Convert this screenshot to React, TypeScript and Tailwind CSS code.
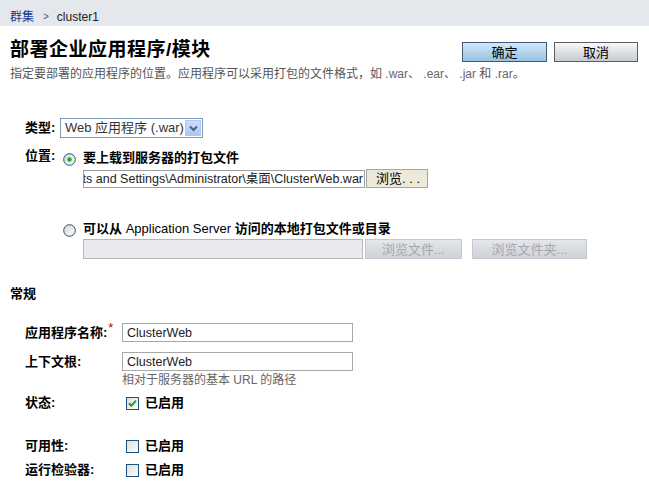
import { ReactNode } from "react";

const font = "font-['Liberation_Sans','Noto_Sans_CJK_SC',sans-serif]";

function Radio({ checked }: { checked?: boolean }) {
  return (
    <svg width="13" height="13" viewBox="0 0 13 13" className="shrink-0 translate-y-[3px]">
      <defs>
        <linearGradient id="radioFill" x1="0" y1="0" x2="1" y2="1">
          <stop offset="0" stopColor="#d6d6ce" />
          <stop offset="1" stopColor="#ffffff" />
        </linearGradient>
      </defs>
      <circle cx="6.5" cy="6.5" r="5.8" fill="url(#radioFill)" stroke="#1c5180" strokeWidth="1" />
      {checked && <circle cx="6.5" cy="6.5" r="2.2" fill="#2aa52a" />}
    </svg>
  );
}

function Checkbox({ checked }: { checked?: boolean }) {
  return (
    <svg width="13" height="13" viewBox="0 0 13 13" className="shrink-0">
      <defs>
        <linearGradient id="boxFill" x1="0" y1="0" x2="1" y2="1">
          <stop offset="0" stopColor="#dcdcd6" />
          <stop offset="1" stopColor="#ffffff" />
        </linearGradient>
      </defs>
      <rect x="0.5" y="0.5" width="12" height="12" fill="url(#boxFill)" stroke="#1c5180" />
      {checked && (
        <path d="M3 6.3 L5.3 8.8 L10 3.6" fill="none" stroke="#21a121" strokeWidth="2" />
      )}
    </svg>
  );
}

function Row({ label, children, className = "" }: { label: ReactNode; children: ReactNode; className?: string }) {
  return (
    <div className={`flex items-center ${className}`}>
      <div className="w-[97px] shrink-0 font-bold text-black">{label}</div>
      {children}
    </div>
  );
}

function Enabled({ checked }: { checked?: boolean }) {
  return (
    <div className="ml-[4px] flex items-center">
      <Checkbox checked={checked} />
      <span className="ml-[6px] font-bold">已启用</span>
    </div>
  );
}

export default function App() {
  return (
    <div className={`${font} w-[649px] h-[491px] bg-white text-[13px] leading-[16px] text-black overflow-hidden`}>
      <div className="h-[26px] bg-[#e4e7eb] flex items-end pb-[1px] px-[10px] text-[12px]">
        <span className="text-[#0b3b9a]">群集</span>
        <span className="text-[#3b5a9a] ml-[9px] mr-[8px] text-[10px]">&gt;</span>
        <span className="text-[#222]">cluster1</span>
      </div>

      <div className="flex items-start pl-[10px] pr-[11px] pt-[13px]">
        <h1 className="text-[19px] leading-[22px] font-bold tracking-[0.5px]">部署企业应用程序/模块</h1>
        <div className="ml-auto flex gap-[7px] mt-[3px]">
          <button className="w-[85px] h-[20px] border border-[#3e5c78] bg-gradient-to-b from-[#d4e8f6] to-[#96c2e2] text-[13px] leading-none">
            确定
          </button>
          <button className="w-[84px] h-[20px] border border-[#5a5f66] bg-gradient-to-b from-[#f8f8f8] to-[#c6cad2] text-[13px] leading-none">
            取消
          </button>
        </div>
      </div>

      <p className="pl-[10px] mt-[4px] text-[12px] leading-[16px] text-[#555]">
        指定要部署的应用程序的位置。应用程序可以采用打包的文件格式，如 <span className="text-[#666]">.war、 .ear、 .jar</span> 和 <span className="text-[#666]">.rar</span>。
      </p>

      <div className="pl-[25px] mt-[36px]">
        <div className="flex items-center">
          <div className="w-[35px] font-bold">类型:</div>
          <div className="w-[143px] h-[20px] border border-[#7f9db9] flex items-center pl-[4px] pr-[1px]">
            <span className="text-[#333] whitespace-nowrap">Web 应用程序 (.war)</span>
            <div className="ml-auto w-[16px] h-[16px] bg-gradient-to-b from-[#cddcfc] to-[#b2c6f4] border border-[#b4c7f2] flex items-center justify-center">
              <svg width="9" height="7" viewBox="0 0 9 7">
                <path d="M1 1.5 L4.5 5 L8 1.5" fill="none" stroke="#4d6185" strokeWidth="2" />
              </svg>
            </div>
          </div>
        </div>

        <div className="flex mt-[10px]">
          <div className="w-[38px] font-bold">位置:</div>
          <div className="flex flex-col">
            <div className="flex items-start h-[16px] mt-[2px]">
              <Radio checked />
              <span className="ml-[7px] font-bold">要上载到服务器的打包文件</span>
            </div>
            <div className="flex items-center ml-[20px] mt-[3px]">
              <div className="w-[282px] h-[18px] border border-[#9aa0a6] overflow-hidden flex items-center justify-end pr-[1px] whitespace-nowrap text-[12.5px] text-[#222]">
                C:\Documents and Settings\Administrator\桌面\ClusterWeb.war
              </div>
              <button className="ml-[1px] w-[62px] h-[19px] border border-[#a5a5a5] bg-[#ece9d8] text-left pl-[9px] text-[13px] leading-none">
                浏览. . .
              </button>
            </div>

            <div className="flex items-start h-[16px] mt-[33px]">
              <Radio />
              <span className="ml-[7px] font-bold">
                可以从 <span className="font-normal">Application Server</span> 访问的本地打包文件或目录
              </span>
            </div>
            <div className="flex items-center ml-[20px] mt-[2px]">
              <div className="w-[280px] h-[20px] border border-[#b4b8be] bg-[#e8eaee]" />
              <button className="ml-[2px] w-[97px] h-[20px] border border-[#c5c9cf] bg-gradient-to-b from-[#e4e6ea] to-[#cfd2d8] text-[#a4a8ae] text-[13px] leading-none">
                浏览文件...
              </button>
              <button className="ml-[10px] w-[115px] h-[20px] border border-[#c5c9cf] bg-gradient-to-b from-[#e4e6ea] to-[#cfd2d8] text-[#a4a8ae] text-[13px] leading-none">
                浏览文件夹...
              </button>
            </div>
          </div>
        </div>
      </div>

      <h2 className="pl-[10px] mt-[27px] font-bold leading-[16px]">常规</h2>

      <div className="pl-[25px] mt-[21px]">
        <Row label={<span>应用程序名称:<span className="text-[#c00] font-normal relative -top-[5px] ml-[1px]">*</span></span>}>
          <div className="w-[231px] h-[19px] border border-[#a8a8a8] flex items-center pl-[4px] text-[12.5px] text-[#222]">ClusterWeb</div>
        </Row>
        <Row label="上下文根:" className="mt-[10px]">
          <div className="w-[231px] h-[19px] border border-[#a8a8a8] flex items-center pl-[4px] text-[12.5px] text-[#222]">ClusterWeb</div>
        </Row>
        <div className="ml-[97px] mt-[1px] text-[#666] text-[12px] leading-[16px]">相对于服务器的基本 URL 的路径</div>

        <Row label="状态:" className="mt-[7px]">
          <Enabled checked />
        </Row>
        <Row label="可用性:" className="mt-[27px]">
          <Enabled />
        </Row>
        <Row label="运行检验器:" className="mt-[8px]">
          <Enabled />
        </Row>
      </div>
    </div>
  );
}
